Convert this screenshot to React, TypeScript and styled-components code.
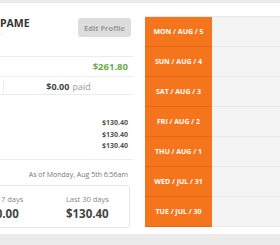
import React from 'react';
import styled, { createGlobalStyle } from 'styled-components';

const GlobalStyle = createGlobalStyle`
    body {
        margin: 0;
        background: #ebebeb;
        font-family: 'Open Sans', 'Liberation Sans', sans-serif;
        overflow: hidden;
    }
`;

const Page = styled.div`
    padding-top: 3px;
    height: 245px;
    box-sizing: border-box;
`;

const Panel = styled.div`
    display: flex;
    height: 231px;
    background: #fff;
    overflow: hidden;
`;

const Profile = styled.div`
    flex: 0 0 260px;
    margin-left: -127px;
    display: flex;
    flex-direction: column;
`;

const Header = styled.div`
    height: 54px;
    box-sizing: border-box;
    display: flex;
    justify-content: space-between;
    align-items: flex-start;
    padding: 15px 2px 0 10px;
    border-bottom: 1px solid #ececec;
`;

const NameBlock = styled.div`
    display: flex;
    flex-direction: column;
    padding-left: 117px;
    margin-top: -1px;
`;

const Name = styled.div`
    font-size: 10.5px;
    font-weight: 700;
    color: #333;
    line-height: 13px;
`;

const Handle = styled.div`
    font-size: 5px;
    color: #aaa;
    line-height: 6px;
    margin-left: -4px;
`;

const EditButton = styled.button`
    width: 53px;
    height: 19px;
    border: none;
    border-radius: 3px;
    background: #dddddd;
    color: #9a9a9a;
    font-family: inherit;
    font-size: 7.5px;
    font-weight: 700;
    padding: 0;
`;

const Row = styled.div<{ $h: number }>`
    height: ${p => p.$h}px;
    box-sizing: border-box;
    display: flex;
    align-items: center;
    justify-content: space-between;
    padding: 0 5px 0 10px;
    border-bottom: 1px solid #ececec;
    font-size: 9px;
`;

const Label = styled.span`
    color: #888;
`;

const Balance = styled.span`
    color: #65ad47;
    font-weight: 700;
    font-size: 9.5px;
`;

const SplitRow = styled.div`
    height: 18px;
    box-sizing: border-box;
    display: grid;
    grid-template-columns: 1fr 1fr;
    border-bottom: 1px solid #ececec;
`;

const SplitCell = styled.div`
    display: flex;
    align-items: center;
    justify-content: center;
    font-size: 9px;
    color: #999;
    & + & {
        border-left: 1px solid #ececec;
        margin: 3px 0;
    }
    b {
        color: #444;
        margin-right: 3px;
    }
`;

const Earnings = styled.div`
    display: flex;
    flex-direction: column;
    padding: 22px 5px 7px 10px;
    border-bottom: 1px solid #ececec;
`;

const EarningRow = styled.div`
    display: flex;
    justify-content: space-between;
    line-height: 11.5px;
    font-size: 7px;
    font-weight: 700;
    color: #555;
`;

const AsOf = styled.div`
    text-align: right;
    padding: 10px 5px 0 0;
    font-size: 7px;
    color: #777;
    line-height: 9px;
`;

const StatsCard = styled.div`
    margin: 6px 3px 0 5px;
    height: 43px;
    box-sizing: border-box;
    border: 1px solid #e6e6e6;
    border-radius: 3px;
    display: grid;
    grid-template-columns: repeat(3, 1fr);
`;

const Stat = styled.div`
    display: flex;
    flex-direction: column;
    align-items: center;
    padding-top: 8px;
`;

const StatLabel = styled.div`
    font-size: 7.5px;
    color: #888;
    line-height: 10px;
`;

const StatValue = styled.div`
    font-size: 11.5px;
    font-weight: 700;
    color: #444;
    line-height: 15px;
    margin-top: 2px;
`;

const Schedule = styled.div`
    flex: 1;
    margin: 13px 0 0 12px;
    display: flex;
    flex-direction: column;
    border-top: 1px solid #e8e8e8;
    align-self: flex-start;
`;

const DayRow = styled.div`
    display: flex;
    height: 30px;
`;

const DayLabel = styled.div`
    flex: 0 0 67px;
    display: flex;
    align-items: center;
    justify-content: center;
    background: #f4751c;
    color: #fff;
    font-size: 7px;
    font-weight: 700;
    border-bottom: 1px solid #e56616;
    box-sizing: border-box;
    white-space: nowrap;
`;

const DaySlot = styled.div`
    flex: 1;
    background: #f4f4f4;
    border-bottom: 1px solid #e9e9e9;
    box-sizing: border-box;
`;

const days = [
    'MON / AUG / 5',
    'SUN / AUG / 4',
    'SAT / AUG / 3',
    'FRI / AUG / 2',
    'THU / AUG / 1',
    'WED / JUL / 31',
    'TUE / JUL / 30',
];

const earnings = ['Delivery fees', 'Tips', 'Total earned'];

const App: React.FC = () => (
    <Page>
        <GlobalStyle />
        <Panel>
            <Profile>
                <Header>
                    <NameBlock>
                        <Name>PAME</Name>
                        <Handle>....</Handle>
                    </NameBlock>
                    <EditButton>Edit Profile</EditButton>
                </Header>
                <Row $h={20}>
                    <Label>Balance</Label>
                    <Balance>$261.80</Balance>
                </Row>
                <SplitRow>
                    <SplitCell>
                        <b>$261.80</b> unpaid
                    </SplitCell>
                    <SplitCell>
                        <b>$0.00</b> paid
                    </SplitCell>
                </SplitRow>
                <Earnings>
                    {earnings.map(label => (
                        <EarningRow key={label}>
                            <Label>{label}</Label>
                            <span>$130.40</span>
                        </EarningRow>
                    ))}
                </Earnings>
                <AsOf>As of Monday, Aug 5th 6:56am</AsOf>
                <StatsCard>
                    <Stat>
                        <StatLabel>Today</StatLabel>
                        <StatValue>$0.00</StatValue>
                    </Stat>
                    <Stat>
                        <StatLabel>Last 7 days</StatLabel>
                        <StatValue>$0.00</StatValue>
                    </Stat>
                    <Stat>
                        <StatLabel>Last 30 days</StatLabel>
                        <StatValue>$130.40</StatValue>
                    </Stat>
                </StatsCard>
            </Profile>
            <Schedule>
                {days.map(day => (
                    <DayRow key={day}>
                        <DayLabel>{day}</DayLabel>
                        <DaySlot />
                    </DayRow>
                ))}
            </Schedule>
        </Panel>
    </Page>
);

export default App;
